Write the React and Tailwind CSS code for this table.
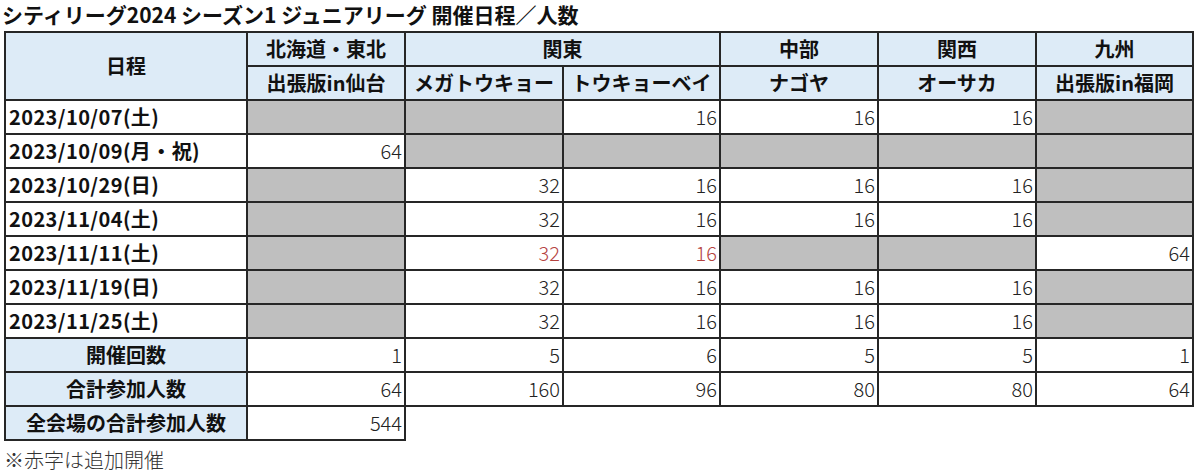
const rows = [
  { date: "2023/10/07(土)", cells: [null, null, "16", "16", "16", null] },
  { date: "2023/10/09(月・祝)", cells: ["64", null, null, null, null, null] },
  { date: "2023/10/29(日)", cells: [null, "32", "16", "16", "16", null] },
  { date: "2023/11/04(土)", cells: [null, "32", "16", "16", "16", null] },
  { date: "2023/11/11(土)", cells: [null, "32*", "16*", null, null, "64"] },
  { date: "2023/11/19(日)", cells: [null, "32", "16", "16", "16", null] },
  { date: "2023/11/25(土)", cells: [null, "32", "16", "16", "16", null] },
];

const summary = [
  { label: "開催回数", cells: ["1", "5", "6", "5", "5", "1"] },
  { label: "合計参加人数", cells: ["64", "160", "96", "80", "80", "64"] },
];

const border = "border-2 border-[#262626]";
const head = `${border} bg-[#ddebf7] text-center font-bold text-[20px] text-[#111]`;

const NumCell = ({ value }) => {
  if (value === null) return <td className={`${border} bg-[#bfbfbf]`} />;
  const red = value.endsWith("*");
  return (
    <td className={`${border} bg-white text-right pr-[2px] text-[20px] font-light ${red ? "text-[#b5433f]" : "text-[#222]"}`}>
      {value.replace("*", "")}
    </td>
  );
};

export default function App() {
  return (
    <div
      className="w-[1200px] h-[474px] bg-white overflow-hidden"
      style={{ fontFamily: '"Noto Sans CJK JP", "Noto Sans", sans-serif' }}
    >
      <h1 className="h-[31px] pl-[2px] text-[21px] font-bold leading-[29px] text-[#111]">
        シティリーグ2024 シーズン1 ジュニアリーグ 開催日程／人数
      </h1>
      <table className="ml-[4px] table-fixed border-collapse leading-none">
        <colgroup>
          <col className="w-[242px]" />
          <col className="w-[158px]" />
          <col className="w-[158px]" />
          <col className="w-[157px]" />
          <col className="w-[158px]" />
          <col className="w-[158px]" />
          <col className="w-[157px]" />
        </colgroup>
        <tbody>
          <tr className="h-[34px]">
            <td rowSpan={2} className={head}>日程</td>
            <td className={head}>北海道・東北</td>
            <td colSpan={2} className={head}>関東</td>
            <td className={head}>中部</td>
            <td className={head}>関西</td>
            <td className={head}>九州</td>
          </tr>
          <tr className="h-[34px]">
            <td className={head}>出張版in仙台</td>
            <td className={head}>メガトウキョー</td>
            <td className={head}>トウキョーベイ</td>
            <td className={head}>ナゴヤ</td>
            <td className={head}>オーサカ</td>
            <td className={head}>出張版in福岡</td>
          </tr>
          {rows.map((r) => (
            <tr key={r.date} className="h-[34px]">
              <td className={`${border} bg-white pl-[3px] text-[20px] tracking-[0.4px] font-semibold text-[#111]`}>{r.date}</td>
              {r.cells.map((c, i) => (
                <NumCell key={i} value={c} />
              ))}
            </tr>
          ))}
          {summary.map((s) => (
            <tr key={s.label} className="h-[34px]">
              <td className={head}>{s.label}</td>
              {s.cells.map((c, i) => (
                <NumCell key={i} value={c} />
              ))}
            </tr>
          ))}
          <tr className="h-[34px]">
            <td className={head}>全会場の合計参加人数</td>
            <NumCell value="544" />
          </tr>
        </tbody>
      </table>
      <p className="pl-[4px] pt-[4px] text-[20px] font-light text-[#333]">※赤字は追加開催</p>
    </div>
  );
}
